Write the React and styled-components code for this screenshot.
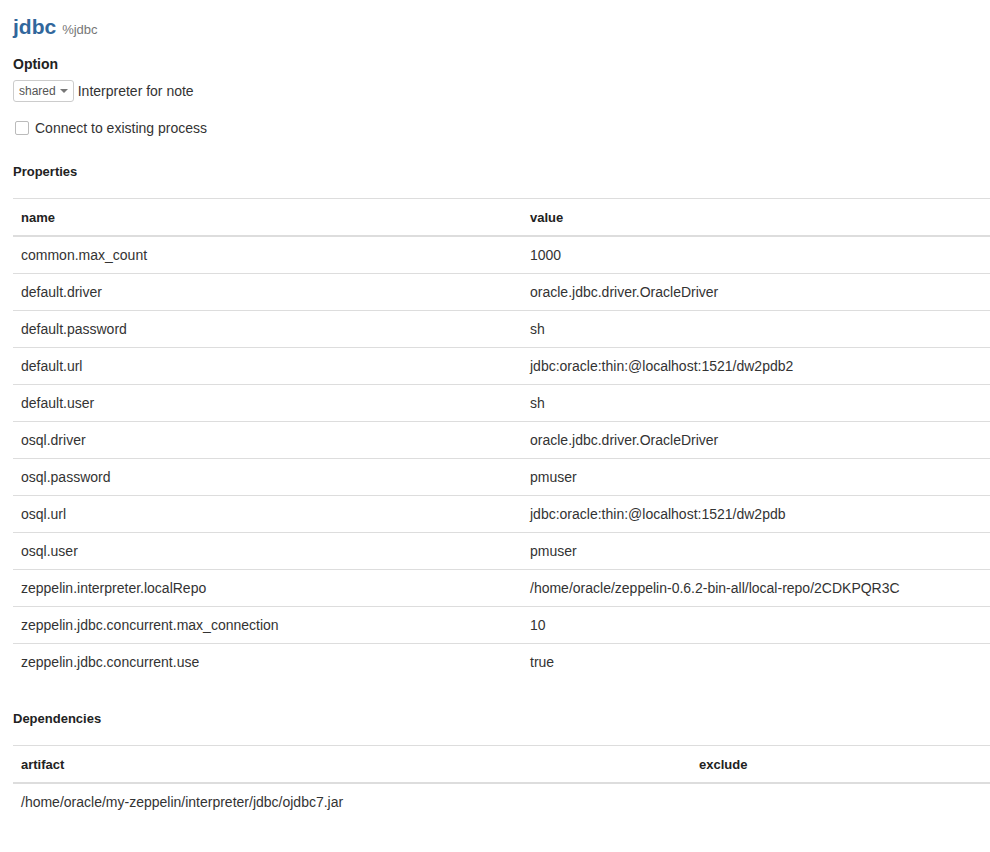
import styled, { createGlobalStyle } from 'styled-components'

const GlobalStyle = createGlobalStyle`
   body {
      margin: 0;
      background: #fff;
      font-family: "Liberation Sans", Arial, sans-serif;
      font-size: 14px;
      color: #333;
   }
`

const Page = styled.div`
   padding: 15px 0 40px 13px;
`

const TitleRow = styled.div`
   display: flex;
   align-items: baseline;
   gap: 6px;
   height: 30px;
`

const Title = styled.span`
   font-size: 21px;
   font-weight: bold;
   color: #31679c;
`

const Subtitle = styled.span`
   font-size: 13px;
   color: #777;
`

const OptionLabel = styled.div`
   margin-top: 11px;
   font-size: 14px;
   font-weight: bold;
   color: #222;
`

const SelectRow = styled.div`
   display: flex;
   align-items: center;
   gap: 4px;
   margin-top: 8px;
`

const Select = styled.div`
   display: inline-flex;
   align-items: center;
   gap: 4px;
   height: 20px;
   padding: 0 5px;
   border: 1px solid #ccc;
   border-radius: 3px;
   font-size: 12px;
   color: #555;
`

const Caret = styled.span`
   width: 0;
   height: 0;
   border-left: 4px solid transparent;
   border-right: 4px solid transparent;
   border-top: 4px solid #777;
`

const CheckRow = styled.label`
   display: flex;
   align-items: center;
   gap: 6px;
   margin-top: 18px;
   margin-left: 2px;
`

const Box = styled.span`
   width: 12px;
   height: 12px;
   border: 1px solid #bbb;
   border-radius: 2px;
   background: #fff;
`

const Section = styled.div`
   margin-top: ${(props) => props.top || '28px'};
   font-size: 13px;
   font-weight: bold;
   color: #222;
`

const Table = styled.table`
   width: 977px;
   table-layout: fixed;
   margin-top: 19px;
   border-collapse: collapse;
   border-top: 1px solid #ddd;
   font-size: 14px;
   color: #333;
`

const Th = styled.th`
   text-align: left;
   font-size: 13px;
   font-weight: bold;
   color: #222;
   height: 36px;
   padding: 0 8px;
   border-bottom: 2px solid #ddd;
   width: ${(props) => props.w || 'auto'};
`

const Td = styled.td`
   height: 36px;
   padding: 0 8px;
   border-bottom: ${(props) => (props.last ? 'none' : '1px solid #ddd')};
`

const properties = [
   ['common.max_count', '1000'],
   ['default.driver', 'oracle.jdbc.driver.OracleDriver'],
   ['default.password', 'sh'],
   ['default.url', 'jdbc:oracle:thin:@localhost:1521/dw2pdb2'],
   ['default.user', 'sh'],
   ['osql.driver', 'oracle.jdbc.driver.OracleDriver'],
   ['osql.password', 'pmuser'],
   ['osql.url', 'jdbc:oracle:thin:@localhost:1521/dw2pdb'],
   ['osql.user', 'pmuser'],
   ['zeppelin.interpreter.localRepo', '/home/oracle/zeppelin-0.6.2-bin-all/local-repo/2CDKPQR3C'],
   ['zeppelin.jdbc.concurrent.max_connection', '10'],
   ['zeppelin.jdbc.concurrent.use', 'true'],
]

function App() {
   return (
      <>
         <GlobalStyle />
         <Page>
            <TitleRow>
               <Title>jdbc</Title>
               <Subtitle>%jdbc</Subtitle>
            </TitleRow>
            <OptionLabel>Option</OptionLabel>
            <SelectRow>
               <Select>
                  shared <Caret />
               </Select>
               Interpreter for note
            </SelectRow>
            <CheckRow>
               <Box />
               Connect to existing process
            </CheckRow>

            <Section top="28px">Properties</Section>
            <Table>
               <thead>
                  <tr>
                     <Th w="493px">name</Th>
                     <Th>value</Th>
                  </tr>
               </thead>
               <tbody>
                  {properties.map(([name, value], i) => (
                     <tr key={name}>
                        <Td last={i === properties.length - 1}>{name}</Td>
                        <Td last={i === properties.length - 1}>{value}</Td>
                     </tr>
                  ))}
               </tbody>
            </Table>

            <Section top="31px">Dependencies</Section>
            <Table>
               <thead>
                  <tr>
                     <Th w="662px">artifact</Th>
                     <Th>exclude</Th>
                  </tr>
               </thead>
               <tbody>
                  <tr>
                     <Td last>/home/oracle/my-zeppelin/interpreter/jdbc/ojdbc7.jar</Td>
                     <Td last></Td>
                  </tr>
               </tbody>
            </Table>
         </Page>
      </>
   )
}

export default App
